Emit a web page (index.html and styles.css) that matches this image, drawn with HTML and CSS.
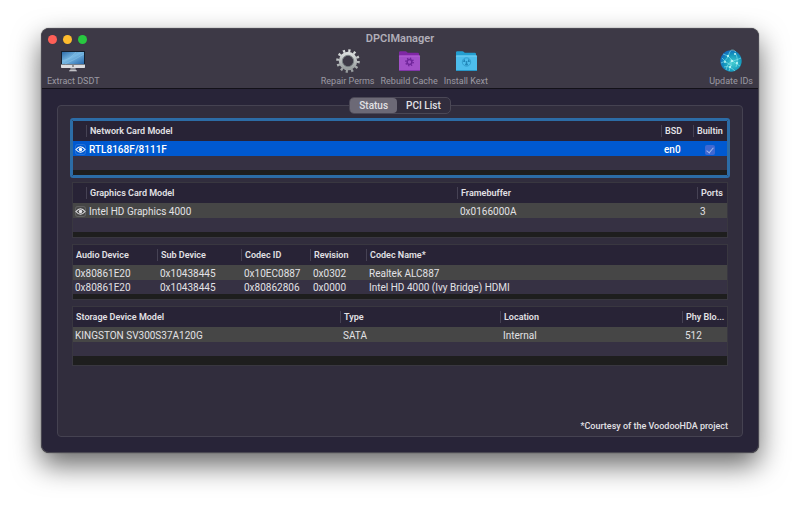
FILE: index.html
```html
<!DOCTYPE html>
<html lang="en">
<head>
    <meta charset="UTF-8">
    <meta name="viewport" content="width=device-width, initial-scale=1.0">
    <title>DPCIManager</title>
    <link rel="stylesheet" href="styles.css">
</head>
<body>
    <main class="window">
        <header class="titlebar">
            <div class="title-row">
                <div class="lights">
                    <button class="light red" aria-label="Close"></button>
                    <button class="light yellow" aria-label="Minimize"></button>
                    <button class="light green" aria-label="Zoom"></button>
                </div>
                <h1>DPCIManager</h1>
            </div>
            <div class="toolbar">
                <button class="tool">
                    <svg viewBox="0 0 24 24" aria-hidden="true">
                        <defs>
                            <linearGradient id="screen" x1="0" y1="0" x2="1" y2="1">
                                <stop offset="0" stop-color="#2d6ca8"/>
                                <stop offset=".45" stop-color="#78b9e4"/>
                                <stop offset="1" stop-color="#2767aa"/>
                            </linearGradient>
                        </defs>
                        <rect x="0" y="2" width="24" height="14" fill="#15202e"/>
                        <rect x="1" y="3" width="22" height="12" fill="url(#screen)"/>
                        <path d="M1 12Q10 10 15 3M4 15Q15 10 23 5" stroke="#a4d3ef" stroke-width=".7" fill="none" opacity=".5"/>
                        <path d="M0 15.500h24v2.800q0 .7-.7.7H.7q-.7 0-.7-.7z" fill="#dcdde0"/>
                        <circle cx="12" cy="17" r=".8" fill="#333"/>
                        <path d="M9.500 19h5l.5 2.500h-6z" fill="#8e8f95"/>
                        <path d="M8.500 21.300h7l.5 1h-8z" fill="#e2e2e5"/>
                    </svg>
                    <span>Extract DSDT</span>
                </button>
                <div class="tool-group">
                    <button class="tool">
                        <svg viewBox="0 0 24 24" aria-hidden="true">
                            <defs>
                                <linearGradient id="steel" x1="0" y1="0" x2="0" y2="1">
                                    <stop offset="0" stop-color="#d9dcdc"/>
                                    <stop offset="1" stop-color="#999e9f"/>
                                </linearGradient>
                            </defs>
                            <circle cx="12" cy="12" r="10.300" fill="none" stroke="url(#steel)" stroke-width="3" stroke-dasharray="2.200 3.193"/>
                            <circle cx="12" cy="12" r="7.300" fill="none" stroke="url(#steel)" stroke-width="3.800"/>
                            <circle cx="12" cy="12" r="5.700" fill="none" stroke="#70787b" stroke-width=".8"/>
                        </svg>
                        <span>Repair Perms</span>
                    </button>
                    <button class="tool">
                        <svg viewBox="0 0 24 24" aria-hidden="true">
                            <path d="M2 3.500q0-1.200 1.200-1.200h5.300q.8 0 1.400.6l.9.900h10q1.200 0 1.200 1.200V9H2z" fill="#7f27a5"/>
                            <rect x="2" y="6.500" width="21" height="15.500" rx="1" fill="#a350c9"/>
                            <path d="M2 7h21" stroke="#b968d9" stroke-width=".8"/>
                            <path d="M2 21.500h21" stroke="#8136a8"/>
                            <circle cx="12.500" cy="13" r="3.700" fill="none" stroke="#70259b" stroke-width="1.500" stroke-dasharray="1.300 1.606"/>
                            <circle cx="12.500" cy="13" r="2.400" fill="none" stroke="#70259b" stroke-width="1.500"/>
                        </svg>
                        <span>Rebuild Cache</span>
                    </button>
                    <button class="tool">
                        <svg viewBox="0 0 24 24" aria-hidden="true">
                            <path d="M2 3.500q0-1.200 1.200-1.200h5.300q.8 0 1.400.6l.9.900h10q1.200 0 1.200 1.200V9H2z" fill="#239ed0"/>
                            <rect x="2" y="6.500" width="21" height="15.500" rx="1" fill="#4dbdec"/>
                            <path d="M2 7h21" stroke="#80d6f6" stroke-width=".8"/>
                            <path d="M2 21.500h21" stroke="#2897c8"/>
                            <circle cx="12.500" cy="13" r="4.200" fill="none" stroke="#2791c2" stroke-width=".7"/>
                            <circle cx="12.500" cy="13" r=".9" fill="#2186b8"/>
                            <path d="M11.200 13H9.100a3.400 3.400 0 0 1 1.700-2.900zM13.800 13h2.100a3.400 3.400 0 0 0-1.700-2.900zM11.900 14.100l-1.100 1.900a3.400 3.400 0 0 0 3.400 0l-1.100-1.900z" fill="#2186b8"/>
                        </svg>
                        <span>Install Kext</span>
                    </button>
                </div>
                <button class="tool">
                    <svg viewBox="0 0 24 24" aria-hidden="true">
                        <defs>
                            <radialGradient id="globe" cx=".6" cy=".6" r=".65">
                                <stop offset="0" stop-color="#43ccd0"/>
                                <stop offset=".6" stop-color="#1599bd"/>
                                <stop offset="1" stop-color="#1266bd"/>
                            </radialGradient>
                        </defs>
                        <circle cx="12" cy="12" r="10.700" fill="url(#globe)"/>
                        <path d="M4 5Q9 6 12 10T21 17M2 14Q8 12 10 5T17 3M7 21Q8 14 14 12T22 9M5 18Q10 16 16 22M12 10Q13 16 10 22M16 4Q20 9 17 18M3 9Q6 13 13 17" fill="none" stroke="#8ceaf0" stroke-width=".6"/>
                        <g fill="#c8fafa">
                            <circle cx="9" cy="7" r="1.100"/><circle cx="16" cy="5" r=".9"/><circle cx="13" cy="12" r="1.100"/>
                            <circle cx="6" cy="13" r=".9"/><circle cx="18" cy="14" r="1"/><circle cx="11" cy="18" r="1"/>
                        </g>
                    </svg>
                    <span>Update IDs</span>
                </button>
            </div>
        </header>

        <section class="content">
            <div class="panel">
                <div class="tabs" role="tablist">
                    <button class="tab active" role="tab" aria-selected="true">Status</button>
                    <button class="tab" role="tab" aria-selected="false">PCI List</button>
                </div>

                <div class="list focused">
                    <table aria-label="Network cards">
                        <colgroup><col class="w-eye"><col><col class="w-bsd"><col class="w-builtin"></colgroup>
                        <thead>
                            <tr><th></th><th>Network Card Model</th><th>BSD</th><th>Builtin</th></tr>
                        </thead>
                        <tbody>
                            <tr class="selected">
                                <td class="icon">
                                    <button class="eye" aria-label="Show network card">
                                        <svg viewBox="0 0 12 11"><path d="M1 5.500Q6-.5 11 5.500Q6 11.500 1 5.500z" fill="none" stroke="currentColor" stroke-width="1.200"/><circle cx="6" cy="5.500" r="1.900" fill="currentColor"/></svg>
                                    </button>
                                </td>
                                <td>RTL8168F/8111F</td>
                                <td>en0</td>
                                <td class="check"><input type="checkbox" aria-label="Builtin" checked disabled></td>
                            </tr>
                            <tr><td colspan="4"></td></tr>
                        </tbody>
                    </table>
                </div>

                <div class="list">
                    <table aria-label="Graphics cards">
                        <colgroup><col class="w-eye"><col><col class="w-framebuffer"><col class="w-ports"></colgroup>
                        <thead>
                            <tr><th></th><th>Graphics Card Model</th><th>Framebuffer</th><th>Ports</th></tr>
                        </thead>
                        <tbody>
                            <tr>
                                <td class="icon">
                                    <button class="eye" aria-label="Show graphics card">
                                        <svg viewBox="0 0 12 11"><path d="M1 5.500Q6-.5 11 5.500Q6 11.500 1 5.500z" fill="none" stroke="currentColor" stroke-width="1.200"/><circle cx="6" cy="5.500" r="1.900" fill="currentColor"/></svg>
                                    </button>
                                </td>
                                <td>Intel HD Graphics 4000</td>
                                <td>0x0166000A</td>
                                <td>3</td>
                            </tr>
                            <tr><td colspan="4"></td></tr>
                        </tbody>
                    </table>
                </div>

                <div class="list">
                    <table aria-label="Audio devices">
                        <colgroup><col class="w-audio"><col class="w-sub"><col class="w-codec"><col class="w-revision"><col></colgroup>
                        <thead>
                            <tr><th>Audio Device</th><th>Sub Device</th><th>Codec ID</th><th>Revision</th><th>Codec Name*</th></tr>
                        </thead>
                        <tbody>
                            <tr><td>0x80861E20</td><td>0x10438445</td><td>0x10EC0887</td><td>0x0302</td><td>Realtek ALC887</td></tr>
                            <tr><td>0x80861E20</td><td>0x10438445</td><td>0x80862806</td><td>0x0000</td><td>Intel HD 4000 (Ivy Bridge) HDMI</td></tr>
                        </tbody>
                    </table>
                </div>

                <div class="list storage">
                    <table aria-label="Storage devices">
                        <colgroup><col><col class="w-type"><col class="w-location"><col class="w-block"></colgroup>
                        <thead>
                            <tr><th>Storage Device Model</th><th>Type</th><th>Location</th><th>Phy Blo...</th></tr>
                        </thead>
                        <tbody>
                            <tr><td>KINGSTON SV300S37A120G</td><td>SATA</td><td>Internal</td><td>512</td></tr>
                            <tr><td colspan="4"></td></tr>
                        </tbody>
                    </table>
                </div>

                <p class="note">*Courtesy of the VoodooHDA project</p>
            </div>
        </section>
    </main>
</body>
</html>
```

FILE: styles.css
```css
* {
    margin: 0;
    padding: 0;
    box-sizing: border-box;
}
body {
    display: flex;
    min-height: 100vh;
    padding: 28px 41px 55px;
    background-color: #fff;
    font-family: Roboto, "Liberation Sans", sans-serif;
    font-size: 10px;
    color: #e2e1e5;
}
button {
    border: none;
    background: none;
    color: inherit;
    font: inherit;
}
.window {
    flex: 1;
    display: flex;
    flex-direction: column;
    border: 1px solid #4a4852;
    border-radius: 8px;
    background-color: #282438;
    box-shadow: 0 0 1px rgba(0, 0, 0, 0.8), 0 12px 28px rgba(0, 0, 0, 0.6);
    overflow: hidden;
}

/* title bar */
.titlebar {
    background-color: #3d3946;
    border-bottom: 1px solid #131119;
}
.title-row {
    display: grid;
    grid-template-columns: 1fr auto 1fr;
    align-items: center;
    height: 20px;
}
.lights {
    display: flex;
    gap: 6px;
    padding-left: 6px;
}
.light {
    width: 9px;
    height: 9px;
    border-radius: 50%;
}
.red {
    background-color: #fe5f57;
}
.yellow {
    background-color: #febc2e;
}
.green {
    background-color: #28c840;
}
h1 {
    font-size: 11px;
    font-weight: 600;
    line-height: 12px;
    color: #b1aeb8;
}
.toolbar {
    display: flex;
    justify-content: space-between;
    padding: 0 5px 1px;
}
.tool-group {
    display: flex;
    gap: 6px;
}
.tool {
    display: flex;
    flex-direction: column;
    align-items: center;
    gap: 2px;
    font-size: 9px;
    line-height: 12px;
    color: #9c99a3;
}
.tool svg {
    width: 24px;
    height: 24px;
}

/* tab panel */
.content {
    flex: 1;
    display: flex;
    padding: 16px 15px 15px;
}
.panel {
    flex: 1;
    display: flex;
    flex-direction: column;
    gap: 6px;
    min-width: 0;
    padding: 0 14px 3px;
    border: 1px solid #454251;
    border-radius: 4px;
    background-color: #312d3d;
}
.tabs {
    display: flex;
    align-self: center;
    margin-top: -9px;
    border: 1px solid #4b4856;
    border-radius: 5px;
    background-color: #312d3d;
}
.tab {
    height: 15px;
    padding: 0 9px;
    border-radius: 4px;
    font-weight: 500;
    line-height: 15px;
}
.tab.active {
    background-color: #6c6976;
}

/* tables */
.list {
    padding-bottom: 5px;
    border: 1px solid #393740;
    background-color: #1e1e1e;
}
.list.focused {
    border-color: #2c6ca6;
    outline: 2px solid #2c6ca6;
    border-radius: 1px;
}
.list.storage {
    padding-bottom: 9px;
}
table {
    width: 100%;
    table-layout: fixed;
    border-collapse: collapse;
}
th, td {
    overflow: hidden;
    text-align: left;
    white-space: nowrap;
}
th {
    height: 20px;
    padding-left: 4px;
    background: linear-gradient(#464254, #464254) no-repeat left center / 1px 12px;
    font-size: 9px;
    font-weight: 600;
    line-height: 20px;
}
th:first-child {
    padding-left: 3px;
    background: none;
}
td {
    height: 15px;
    padding: 3px 0 0 3px;
    line-height: 12px;
}
td:first-child {
    padding-left: 2px;
}
thead tr {
    background-color: #282336;
}
tbody tr {
    background-color: #464646;
}
tbody tr:nth-child(2) {
    background-color: #363143;
}
tbody tr:nth-child(2) td {
    height: 14px;
    padding-top: 2px;
}
tbody tr.selected {
    background-color: #0059d0;
    color: #fff;
    font-weight: 500;
}
.icon {
    padding-top: 1px;
}
.eye {
    display: block;
    width: 11px;
    height: 11px;
    border-radius: 3px;
    box-shadow: inset 0 0 0 1px rgba(255, 255, 255, 0.15);
}
.eye svg {
    display: block;
    width: 11px;
    height: 11px;
}
.check input {
    display: block;
    appearance: none;
    width: 10px;
    height: 10px;
    margin-left: 9px;
    border-radius: 2px;
    background: #3f68d2;
}
.check input::before {
    content: "";
    display: block;
    width: 3px;
    height: 6px;
    margin: 1px auto 0;
    border: solid #a4b7eb;
    border-width: 0 1px 1px 0;
    transform: rotate(40deg);
}
.w-eye {
    width: 13px;
}
.w-bsd {
    width: 32px;
}
.w-builtin {
    width: 34px;
}
.w-framebuffer {
    width: 240px;
}
.w-ports {
    width: 30px;
}
.w-audio {
    width: 84px;
}
.w-sub {
    width: 84px;
}
.w-codec {
    width: 69px;
}
.w-revision {
    width: 56px;
}
.w-type {
    width: 160px;
}
.w-location {
    width: 182px;
}
.w-block {
    width: 45px;
}
.note {
    margin-top: auto;
    font-size: 9px;
    font-weight: 500;
    line-height: 14px;
    text-align: right;
}
```
